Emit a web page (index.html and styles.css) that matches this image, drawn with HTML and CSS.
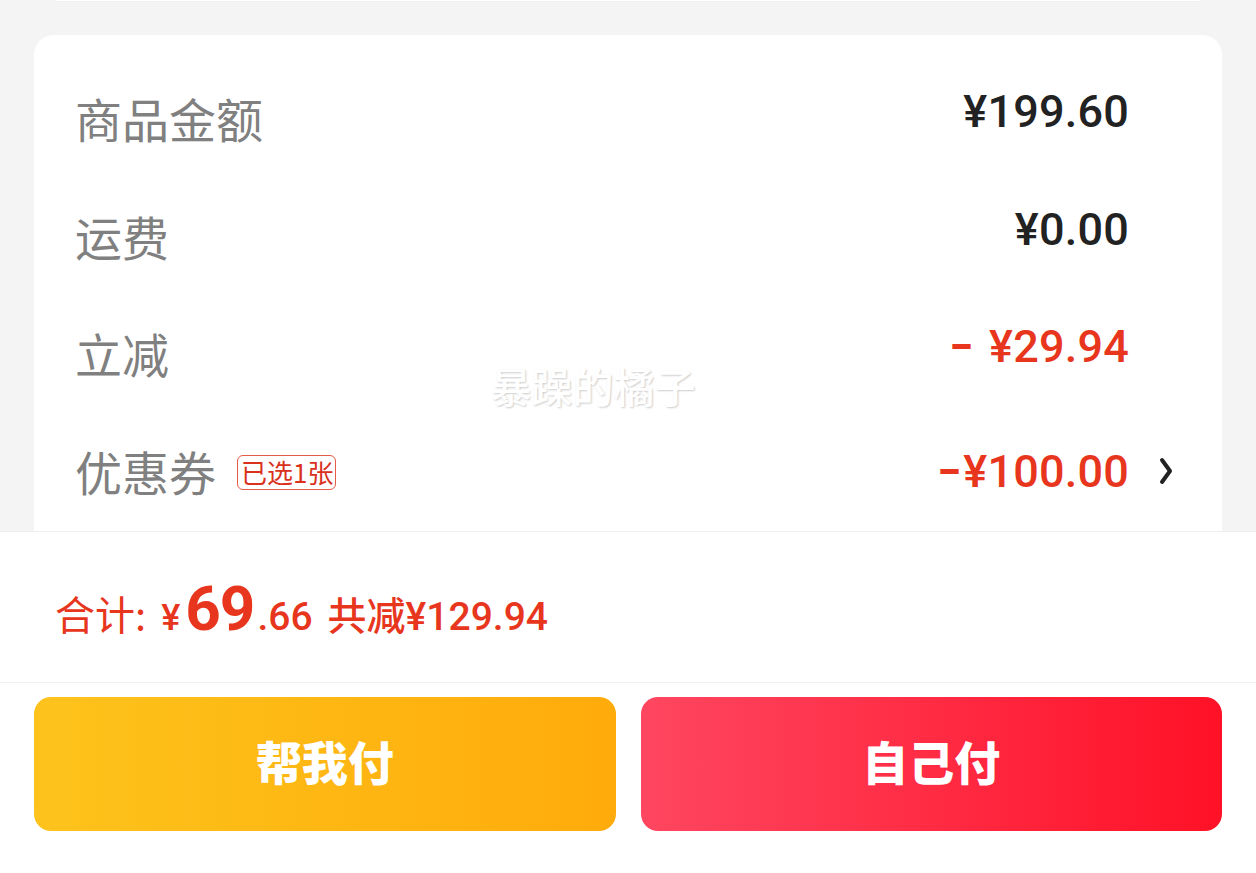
FILE: index.html
```html
<!DOCTYPE html>
<html lang="zh-CN">
<head>
<meta charset="utf-8">
<link rel="stylesheet" href="styles.css">
</head>
<body>
<div class="page">
  <div class="top-strip"></div>
  <section class="card">
    <div class="row">
      <span class="label">商品金额</span>
      <span class="value raised">¥199.60</span>
      <span class="chev-slot"></span>
    </div>
    <div class="row">
      <span class="label">运费</span>
      <span class="value raised">¥0.00</span>
      <span class="chev-slot"></span>
    </div>
    <div class="row">
      <span class="label">立减</span>
      <span class="value raised red"><span class="minus gap">–</span>¥29.94</span>
      <span class="chev-slot"></span>
    </div>
    <div class="row">
      <span class="label">优惠券</span>
      <span class="badge">已选1张</span>
      <span class="value red"><span class="minus">–</span>¥100.00</span>
      <span class="chev-slot">
        <svg class="chev" width="16" height="30" viewBox="0 0 16 30"><path d="M4 4 L12 15 L4 26" fill="none" stroke="#222" stroke-width="4" stroke-linecap="round" stroke-linejoin="round"/></svg>
      </span>
    </div>
    <div class="watermark">暴躁的橘子</div>
  </section>
  <footer class="footer">
    <div class="total">
      <span class="t-label">合计:</span>
      <span class="t-yen">¥</span><span class="t-int">69</span><span class="t-dec">.66</span>
      <span class="t-save">共减<span class="num">¥129.94</span></span>
    </div>
    <div class="actions">
      <button class="btn btn-help">帮我付</button>
      <button class="btn btn-self">自己付</button>
    </div>
  </footer>
</div>
</body>
</html>
```
FILE: styles.css
```css
* { box-sizing: border-box; }
html, body {
  margin: 0;
  padding: 0;
  background: #f4f4f4;
}
body {
  width: 1256px;
  height: 873px;
  overflow: hidden;
  font-family: "Noto Sans CJK SC", "Noto Sans", sans-serif;
}
.page {
  position: relative;
  display: flex;
  flex-direction: column;
  height: 873px;
}
.top-strip {
  margin: 0 56px;
  height: 2px;
  background: #fff;
  border-bottom: 1px solid #f0f0f0;
}
.card {
  position: relative;
  margin: 33px 34px 0;
  background: #fff;
  border-radius: 20px 20px 0 0;
  padding-top: 25px;
  height: 496px;
}
.row {
  display: flex;
  align-items: center;
  height: 117.5px;
  padding-left: 41px;
  padding-right: 48px;
}
.label {
  font-size: 47px;
  color: #808080;
  line-height: 1;
  margin-top: -2px;
}
.badge {
  margin-left: 21px;
  margin-top: 2px;
  border: 1px solid #e65a48;
  border-radius: 6px;
  color: #d9311c;
  font-size: 26px;
  line-height: 32px;
  height: 35px;
  padding: 0 2px 0 3px;
}
.value {
  margin-left: auto;
  font-family: "Roboto", "Noto Sans CJK SC", sans-serif;
  font-weight: 500;
  font-size: 45px;
  color: #222;
  line-height: 1;
  letter-spacing: 0.2px;
}
.value.raised { margin-bottom: 14px; }
.value.red { color: #e7361d; }
.minus {
  display: inline-block;
  font-weight: 700;
  transform: scaleX(0.8);
}
.minus.gap { margin-right: 14px; }
.chev-slot {
  width: 45px;
  display: flex;
  justify-content: flex-end;
  align-items: center;
}
.watermark {
  position: absolute;
  left: 453px;
  top: 325px;
  width: 212px;
  text-align: center;
  font-size: 41px;
  font-weight: 500;
  color: #fff;
  text-shadow: 1px 1px 2px rgba(0,0,0,0.2);
  line-height: 50px;
}
.footer {
  position: relative;
  background: #fff;
  border-top: 1px solid #efefef;
  flex: 1;
  display: flex;
  flex-direction: column;
}
.total {
  height: 151px;
  border-bottom: 1px solid #f0f0f0;
  display: flex;
  align-items: baseline;
  padding-left: 55px;
  padding-top: 46px;
  color: #e7361d;
  line-height: 1;
}
.t-label {
  font-size: 40px;
}
.t-yen {
  margin-left: 15px;
  font-family: "Roboto", sans-serif;
  font-size: 36px;
  font-weight: 500;
}
.t-int {
  margin-left: 5px;
  font-family: "Roboto", sans-serif;
  font-size: 62px;
  font-weight: 700;
  letter-spacing: -1px;
}
.t-dec {
  margin-left: 3px;
  font-family: "Roboto", sans-serif;
  font-size: 39px;
  font-weight: 500;
}
.t-save {
  margin-left: 15px;
  font-size: 39px;
  font-weight: 500;
}
.t-save .num {
  font-family: "Roboto", sans-serif;
  font-weight: 500;
  font-size: 39px;
}
.actions {
  display: flex;
  gap: 25px;
  padding: 14px 34px 0;
}
.btn {
  flex: 1;
  height: 134px;
  border: none;
  border-radius: 17px;
  color: #fff;
  font-family: "Noto Sans CJK SC", sans-serif;
  font-size: 46px;
  font-weight: 900;
  letter-spacing: 0;
  padding: 0 0 8px;
}
.btn-help {
  background: linear-gradient(90deg, #fdc31c 0%, #ffab0b 100%);
}
.btn-self {
  background: linear-gradient(90deg, #ff4660 0%, #ff1127 100%);
}
```
